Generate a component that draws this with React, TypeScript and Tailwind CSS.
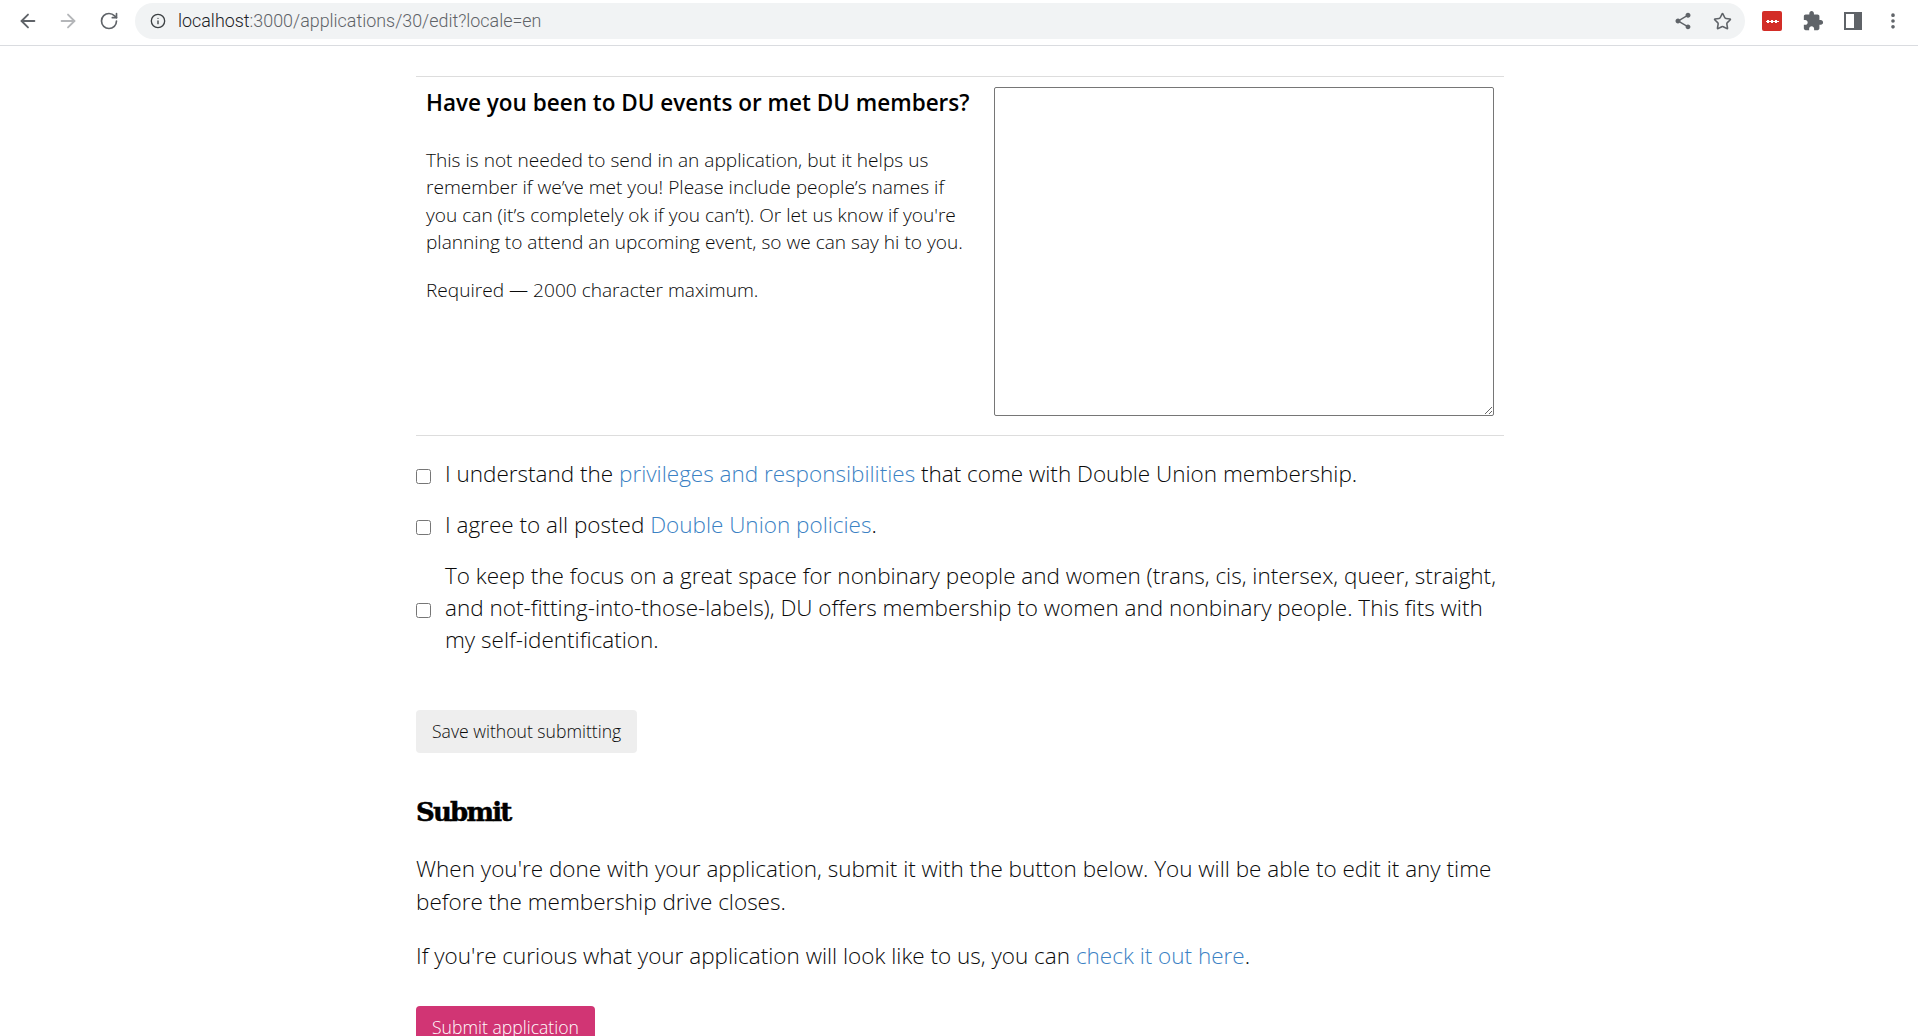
import { ArrowLeft, ArrowRight, RotateCw, Info, Star, MoreVertical } from "lucide-react";

function ShareIcon() {
  return (
    <svg width="20" height="20" viewBox="0 0 24 24" fill="#5f6368">
      <path d="M18 16.08c-.76 0-1.44.3-1.96.77L8.91 12.7c.05-.23.09-.46.09-.7s-.04-.47-.09-.7l7.05-4.11c.54.5 1.25.81 2.04.81 1.66 0 3-1.34 3-3s-1.34-3-3-3-3 1.34-3 3c0 .24.04.47.09.7L8.04 9.81C7.5 9.31 6.79 9 6 9c-1.66 0-3 1.34-3 3s1.34 3 3 3c.79 0 1.5-.31 2.04-.81l7.12 4.16c-.05.21-.08.43-.08.65 0 1.61 1.31 2.92 2.92 2.92s2.92-1.31 2.92-2.92-1.31-2.92-2.92-2.92z" />
    </svg>
  );
}

function PuzzleIcon() {
  return (
    <svg width="22" height="22" viewBox="0 0 24 24" fill="#5f6368">
      <path d="M20.5 11H19V7c0-1.1-.9-2-2-2h-4V3.5C13 2.12 11.88 1 10.5 1S8 2.12 8 3.5V5H4c-1.1 0-1.99.9-1.99 2v3.8H3.5c1.49 0 2.7 1.21 2.7 2.7s-1.21 2.7-2.7 2.7H2V20c0 1.1.9 2 2 2h3.8v-1.5c0-1.49 1.21-2.7 2.7-2.7s2.7 1.21 2.7 2.7V22H17c1.1 0 2-.9 2-2v-4h1.5c1.38 0 2.5-1.12 2.5-2.5S21.88 11 20.5 11z" />
    </svg>
  );
}

function BrowserBar() {
  return (
    <div className="flex h-[46px] items-center border-b border-[#dadce0] bg-white pb-[3px] pl-[17px]">
      <ArrowLeft size={22} color="#5f6368" strokeWidth={2} />
      <ArrowRight size={22} color="#b4b6b9" strokeWidth={2} className="ml-[18px]" />
      <RotateCw size={20} color="#5f6368" strokeWidth={2} className="ml-[20px]" />
      <div className="ml-[16px] flex h-[36px] w-[1610px] items-center rounded-full bg-[#f1f3f4] pl-[15px] pr-[13px] font-['Roboto',sans-serif] text-[17.9px]">
        <Info size={16} color="#3c4043" strokeWidth={2} />
        <span className="ml-[12px] text-[#202124]">localhost</span>
        <span className="text-[#5f6368]">:3000/applications/30/edit?locale=en</span>
        <div className="ml-auto flex items-center gap-[20px]">
          <ShareIcon />
          <Star size={19} color="#5f6368" strokeWidth={2} />
        </div>
      </div>
      <div className="ml-[17px] flex h-[20px] w-[20px] items-center justify-center rounded-[2px] bg-[#d32d27]">
        <span className="h-[3px] w-[13px] bg-[radial-gradient(circle,#fff_1.5px,transparent_1.6px)] bg-[length:4px_3px]" />
      </div>
      <div className="ml-[20px]">
        <PuzzleIcon />
      </div>
      <div className="ml-[20px] flex h-[18px] w-[18px] border-2 border-[#5f6368]">
        <div className="ml-auto h-full w-[6px] bg-[#5f6368]" />
      </div>
      <MoreVertical size={20} color="#5f6368" strokeWidth={2.4} className="ml-[21px]" />
    </div>
  );
}

function CheckRow({ children, className }: { children: React.ReactNode; className?: string }) {
  return (
    <label className={`flex items-center ${className ?? ""}`}>
      <input type="checkbox" className="mt-[5px] h-[15px] w-[15px] shrink-0" />
      <span className="ml-[14px]">{children}</span>
    </label>
  );
}

export default function App() {
  return (
    <div className="h-screen overflow-hidden bg-white font-['Open_Sans',sans-serif] font-light text-[#0a0a0a]">
      <BrowserBar />
      <main className="ml-[416px] w-[1088px] pt-[30px]">
        <section className="flex border-y border-[#dddddd] pb-[19px] pt-[10px]">
          <div className="w-[578px] pl-[10px]">
            <h3 className="text-[22.5px] font-semibold leading-[32px] text-black">
              Have you been to DU events or met DU members?
            </h3>
            <p className="mt-[28px] w-[552px] text-[19.1px] leading-[27.4px]">
              This is not needed to send in an application, but it helps us remember if we’ve met you! Please include people’s names if you can (it’s completely ok if you can’t). Or let us know if you're planning to attend an upcoming event, so we can say hi to you.
            </p>
            <p className="mt-[20px] text-[19.1px] leading-[27.4px]">Required — 2000 character maximum.</p>
          </div>
          <textarea className="h-[329px] w-[500px] rounded-[2px] border border-[#767676] bg-white" />
        </section>

        <div className="mt-[22px] text-[22.5px] leading-[32px]">
          <CheckRow>
            I understand the <a className="text-[#3b82c4]">privileges and responsibilities</a> that come with Double Union membership.
          </CheckRow>
          <CheckRow className="mt-[19px]">
            I agree to all posted <a className="text-[#3b82c4]">Double Union policies</a>.
          </CheckRow>
          <CheckRow className="mt-[19px]">
            To keep the focus on a great space for nonbinary people and women (trans, cis, intersex, queer, straight, and not-fitting-into-those-labels), DU offers membership to women and nonbinary people. This fits with my self-identification.
          </CheckRow>
        </div>

        <button className="mt-[54px] block h-[43px] rounded-[4px] bg-[#eeeeee] px-[16px] pb-[1px] text-[17.6px]">
          Save without submitting
        </button>

        <h2 className="mt-[39px] font-['DejaVu_Serif',serif] text-[26px] font-bold leading-[40px] tracking-[-1.8px] text-black [-webkit-text-stroke:0.5px_black]">
          Submit
        </h2>
        <p className="mt-[20px] text-[22.5px] leading-[33px]">
          When you're done with your application, submit it with the button below. You will be able to edit it any time before the membership drive closes.
        </p>
        <p className="mt-[21px] text-[22.5px] leading-[33px]">
          If you're curious what your application will look like to us, you can <a className="text-[#3b82c4]">check it out here</a>.
        </p>
        <button className="mt-[34px] block h-[43px] rounded-[4px] bg-[#d13574] px-[16px] text-[17.6px] text-white">
          Submit application
        </button>
      </main>
    </div>
  );
}
